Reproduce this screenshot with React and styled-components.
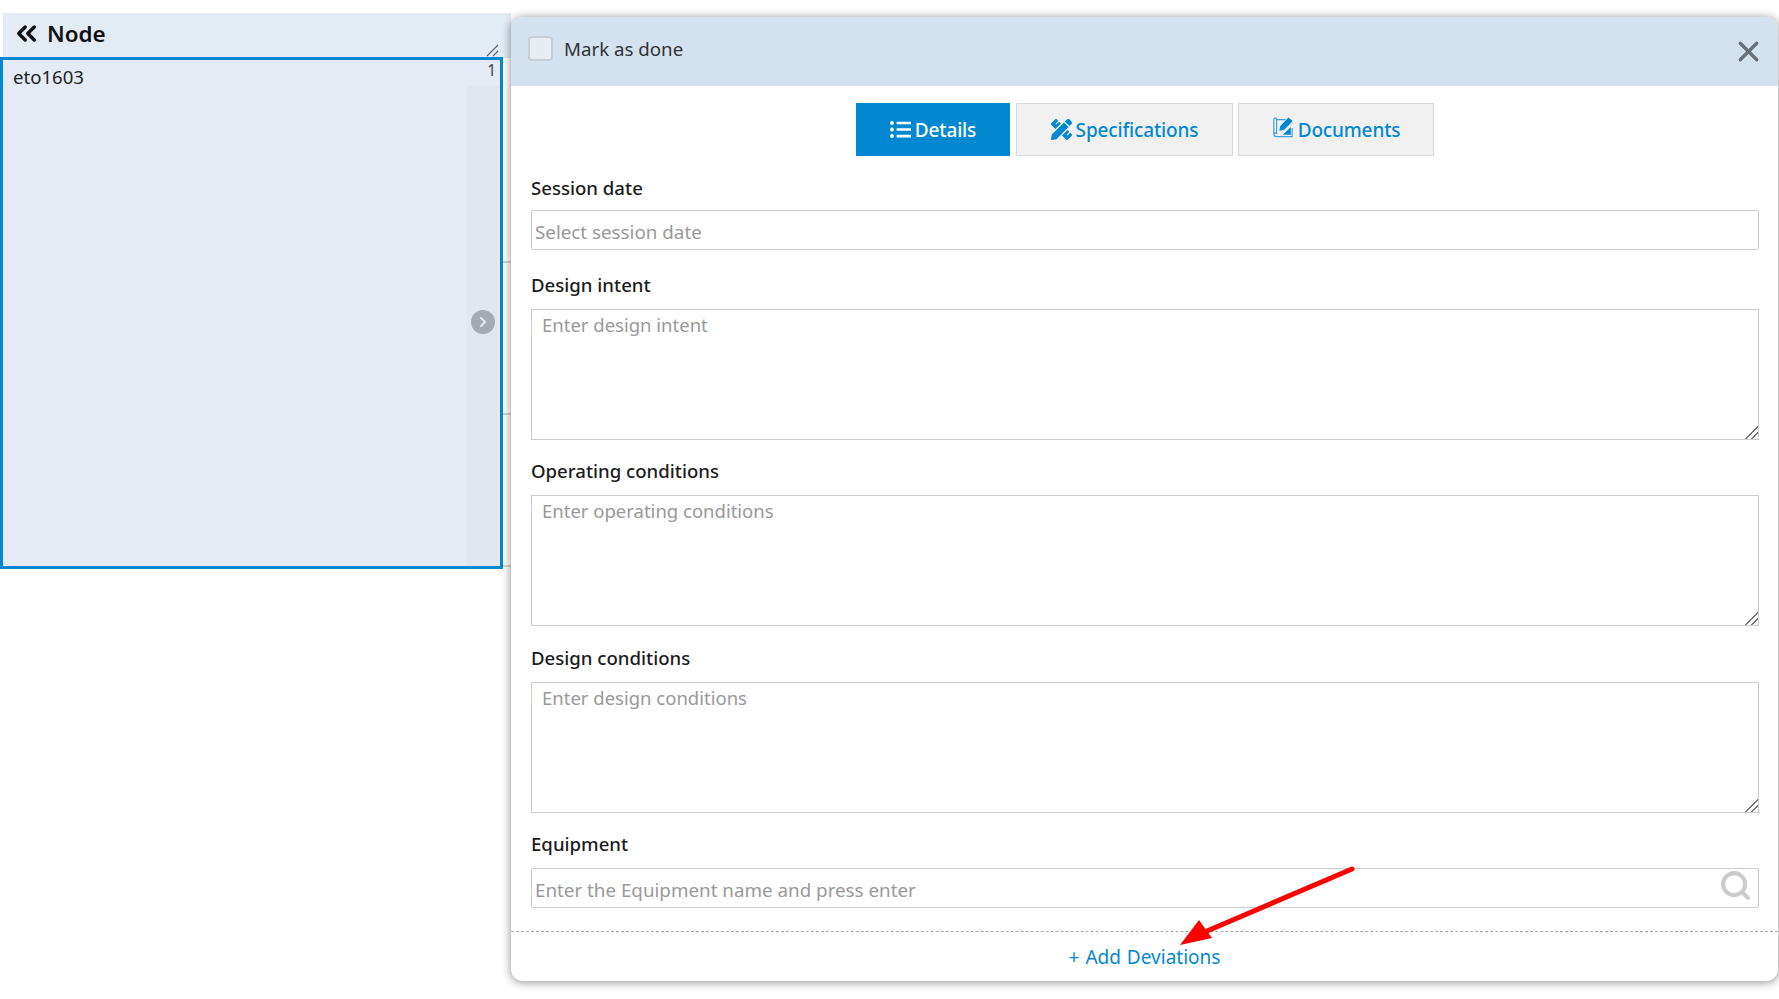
import React from "react";
import styled, { createGlobalStyle } from "styled-components";
import { FaListUl, FaPencilRuler, FaChevronRight } from "react-icons/fa";
import { ChevronsLeft, Search, X } from "lucide-react";

const GlobalStyle = createGlobalStyle`
    html, body {
        margin: 0;
        padding: 0;
        background: #fff;
        overflow: hidden;
    }
    * {
        box-sizing: border-box;
    }
`;

const FONT = `"Noto Sans", "Open Sans", "Liberation Sans", sans-serif`;
const BLUE = "#0288d1";

const Page = styled.div`
    position: relative;
    width: 1779px;
    height: 999px;
    padding-top: 13px;
    font-family: ${FONT};
    color: #222;
`;

const Sidebar = styled.div`
    width: 503px;
`;

const SideHeader = styled.div`
    position: relative;
    display: flex;
    align-items: center;
    gap: 5px;
    width: 508px;
    height: 45px;
    margin-left: 3px;
    padding: 0 0 4px 8px;
    background: #e3ebf5;
    font-size: 22.4px;
    font-weight: 600;
    color: #111;
`;

const ResizeMark = styled.svg`
    position: absolute;
    right: 12px;
    bottom: 1px;
    width: 13px;
    height: 13px;
`;

const NodeBox = styled.div`
    position: relative;
    height: 512px;
    margin-top: -1px;
    padding: 5px 10px;
    border: 3px solid ${BLUE};
    background: #e4ebf5;
    font-size: 18.6px;
    line-height: 24px;
`;

const Counter = styled.span`
    position: absolute;
    top: 0;
    right: 4px;
    font-size: 15.5px;
    line-height: 20px;
    color: #444;
`;

const ScrollStrip = styled.div`
    position: absolute;
    top: 26px;
    right: 0;
    bottom: 0;
    width: 33px;
    background: #e2e6ef;
`;

const ExpandButton = styled.span`
    position: absolute;
    top: 224px;
    left: 4px;
    display: flex;
    align-items: center;
    justify-content: center;
    width: 24px;
    height: 24px;
    border-radius: 50%;
    background: #a4a9b3;
    color: #e6e9ef;
    font-size: 12px;
`;

const BehindRows = styled.div`
    position: absolute;
    top: 261px;
    left: 503px;
    width: 10px;
`;

const BehindRow = styled.div`
    height: 152px;
    border-top: 2px solid #d4d4d4;
`;

const Modal = styled.div`
    position: absolute;
    top: 17px;
    left: 511px;
    display: flex;
    flex-direction: column;
    width: 1267px;
    height: 964px;
    border-radius: 12px;
    background: #fff;
    box-shadow: 0 1px 9px 1px rgba(0, 0, 0, 0.38);
    overflow: hidden;
`;

const ModalHeader = styled.div`
    display: flex;
    align-items: center;
    justify-content: space-between;
    flex: none;
    height: 69px;
    padding: 0 13px 6px 17px;
    background: #d4e2ef;
    font-size: 18.7px;
    color: #333;
`;

const DoneCheck = styled.label`
    display: flex;
    align-items: center;
    gap: 11px;
`;

const CheckBox = styled.span`
    width: 25px;
    height: 25px;
    border: 2px solid #c8ced5;
    border-radius: 4px;
    background: #e8edf3;
`;

const CloseIcon = styled(X)`
    width: 33px;
    height: 33px;
    margin-top: 6px;
    color: #6a6f75;
`;

const Tabs = styled.div`
    display: flex;
    flex: none;
    margin: 17px 0 0 345px;
`;

const Tab = styled.button`
    display: flex;
    align-items: center;
    justify-content: center;
    gap: 4px;
    width: ${(p) => p.$width}px;
    height: 53px;
    margin-right: ${(p) => p.$gap}px;
    padding: 0;
    border: ${(p) => (p.$active ? "none" : "1px solid #d9d9d9")};
    background: ${(p) => (p.$active ? BLUE : "#f1f1f1")};
    color: ${(p) => (p.$active ? "#fff" : BLUE)};
    font-family: ${FONT};
    font-size: 19px;
    font-weight: 500;
    letter-spacing: -0.15px;
`;

const Form = styled.div`
    flex: 1;
    padding: 20px 19px 0 20px;
`;

const Field = styled.div`
    margin-bottom: ${(p) => p.$gap}px;
`;

const Label = styled.div`
    height: 24px;
    margin-bottom: ${(p) => p.$gap}px;
    font-size: 18.6px;
    font-weight: 500;
    line-height: 24px;
    color: #1c1c1c;
`;

const TextInput = styled.input`
    display: block;
    width: 100%;
    height: ${(p) => p.$height}px;
    padding: 3px 3px 0;
    border: 1px solid #ccc;
    border-radius: 2px;
    outline: none;
    background: #fff;
    font-family: ${FONT};
    font-size: 18.8px;
    color: #333;
    &::placeholder {
        color: #999;
        opacity: 1;
    }
`;

const TextArea = styled.textarea`
    display: block;
    width: 100%;
    height: ${(p) => p.$height}px;
    padding: 3px 10px;
    border: 1px solid #ccc;
    outline: none;
    background: #fff;
    font-family: ${FONT};
    font-size: 18.5px;
    line-height: 24px;
    color: #333;
    resize: vertical;
    &::placeholder {
        color: #999;
        opacity: 1;
    }
    &::-webkit-resizer {
        background: linear-gradient(
            135deg,
            transparent 54%,
            #777 54%,
            #777 61%,
            transparent 61%,
            transparent 74%,
            #777 74%,
            #777 81%,
            transparent 81%
        );
    }
`;

const SearchWrap = styled.div`
    position: relative;
`;

const SearchIcon = styled(Search)`
    position: absolute;
    top: 1px;
    right: 7px;
    width: 33px;
    height: 33px;
    color: #ccc;
`;

const Footer = styled.div`
    flex: none;
    height: 50px;
    border-top: 1px dashed #aaa;
    text-align: center;
    font-size: 19px;
    word-spacing: 1px;
    line-height: 50px;
    color: ${BLUE};
`;

const ArrowSvg = styled.svg`
    position: absolute;
    top: 862px;
    left: 1170px;
    width: 190px;
    height: 90px;
    overflow: visible;
`;

const DocMark = styled.svg`
    width: 22px;
    height: 22px;
    margin-top: -5px;
`;

const DocIcon = () => (
    <DocMark viewBox="0 0 24 24" fill="none">
        <path
            d="M2 3.5C2 1.5 5 1.5 5 3.5V20C5 18 2 18 2 20Z M5 4H15 M2 20C2 22 4 22.5 5 22.5H22V13"
            stroke={BLUE}
            strokeOpacity="0.75"
            strokeWidth="1.3"
        />
        <path d="M8 16L9 11L18 1.5L22.5 5.5L13.5 15Z" fill={BLUE} />
        <path d="M12 20.5H20.5V12Z" fill={BLUE} />
    </DocMark>
);

const fields = [
    { label: "Design intent", placeholder: "Enter design intent", gap: 19 },
    { label: "Operating conditions", placeholder: "Enter operating conditions", gap: 20 },
    { label: "Design conditions", placeholder: "Enter design conditions", gap: 19 }
];

const App = () => {
    return (
        <Page>
            <GlobalStyle />
            <Sidebar>
                <SideHeader>
                    <ChevronsLeft size={31} strokeWidth={2.7} />
                    Node
                    <ResizeMark viewBox="0 0 13 13">
                        <path d="M1 12L12 1M7 12L12 7" stroke="#666" strokeWidth="1.2" />
                    </ResizeMark>
                </SideHeader>
                <NodeBox>
                    eto1603
                    <Counter>1</Counter>
                    <ScrollStrip>
                        <ExpandButton>
                            <FaChevronRight />
                        </ExpandButton>
                    </ScrollStrip>
                </NodeBox>
            </Sidebar>

            <BehindRows>
                <BehindRow />
                <BehindRow />
                <BehindRow />
            </BehindRows>

            <Modal>
                <ModalHeader>
                    <DoneCheck>
                        <CheckBox />
                        Mark as done
                    </DoneCheck>
                    <CloseIcon strokeWidth={2.4} />
                </ModalHeader>
                <Tabs>
                    <Tab $active $width={154} $gap={6}>
                        <FaListUl size={21} />
                        Details
                    </Tab>
                    <Tab $width={217} $gap={5}>
                        <FaPencilRuler size={21} />
                        Specifications
                    </Tab>
                    <Tab $width={196} $gap={0}>
                        <DocIcon />
                        Documents
                    </Tab>
                </Tabs>
                <Form>
                    <Field $gap={23}>
                        <Label $gap={10}>Session date</Label>
                        <TextInput $height={40} placeholder="Select session date" />
                    </Field>
                    {fields.map((f) => (
                        <Field key={f.label} $gap={f.gap}>
                            <Label $gap={12}>{f.label}</Label>
                            <TextArea $height={131} placeholder={f.placeholder} />
                        </Field>
                    ))}
                    <Field $gap={0}>
                        <Label $gap={12}>Equipment</Label>
                        <SearchWrap>
                            <TextInput $height={40} placeholder="Enter the Equipment name and press enter" />
                            <SearchIcon strokeWidth={3} />
                        </SearchWrap>
                    </Field>
                </Form>
                <Footer>+ Add Deviations</Footer>
            </Modal>

            <ArrowSvg viewBox="0 0 190 90">
                <path d="M182 7L30 72" stroke="#f00" strokeWidth="5" strokeLinecap="round" />
                <path d="M10 83L29 58L42 76Z" fill="#f00" />
            </ArrowSvg>
        </Page>
    );
};

export default App;
